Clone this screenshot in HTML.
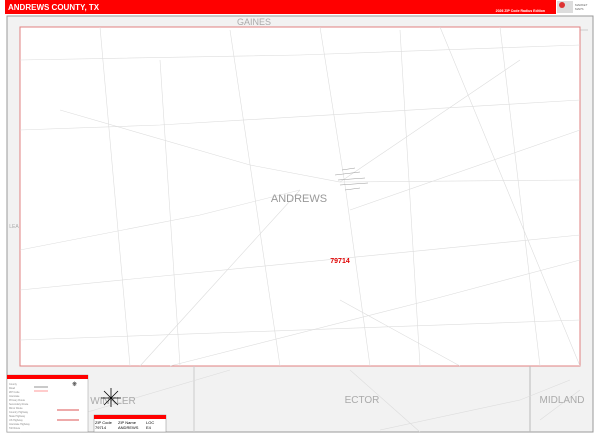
<!DOCTYPE html>
<html><head><meta charset="utf-8"><style>
html,body{margin:0;padding:0;background:#fff;width:600px;height:435px;overflow:hidden;font-family:"Liberation Sans",sans-serif}
</style></head><body>
<svg width="600" height="435" viewBox="0 0 600 435" xmlns="http://www.w3.org/2000/svg" font-family="Liberation Sans, sans-serif">
<rect x="5" y="0" width="551" height="14" fill="#ff0000"/>
<text x="8" y="10" font-size="8" font-weight="bold" fill="#fff">ANDREWS COUNTY, TX</text>
<text x="545" y="12" font-size="3.5" font-weight="bold" fill="#fff" text-anchor="end">2026 ZIP Code Radius Edition</text>
<rect x="557" y="1" width="16" height="12" fill="#ddd"/><circle cx="562" cy="5" r="3" fill="#d33"/>
<text x="575" y="6" font-size="3" fill="#666">MARKET</text><text x="575" y="10" font-size="3" fill="#666">MAPS</text>
<rect x="7" y="16" width="586" height="416" fill="#f2f2f2" stroke="#999" stroke-width="1"/>
<rect x="20" y="30" width="568" height="337" fill="#f2f2f2"/>
<line x1="20" y1="30" x2="588" y2="30" stroke="#ccc"/>
<rect x="20" y="27" width="560" height="339" fill="#fff" stroke="#e08080" stroke-width="1"/>
<line x1="194" y1="366" x2="194" y2="432" stroke="#ccc"/>
<line x1="530" y1="366" x2="530" y2="432" stroke="#bbb"/>
<g stroke="#ddd" stroke-width="0.6" fill="none">
<path d="M320 27 L345 185 L370 366"/>
<path d="M60 110 L250 165 L340 182 L520 60"/>
<path d="M340 182 L580 180"/>
<path d="M300 190 L200 300 L140 366"/>
<path d="M20 250 L200 215 L300 190"/>
<path d="M350 210 L580 130"/>
<path d="M340 300 L460 366"/>
<path d="M440 27 L580 366" />
<path d="M170 366 L430 300 L580 260"/>
<path d="M230 30 L280 366"/>
<path d="M100 27 L130 366"/>
<path d="M500 27 L540 366"/>
<path d="M20 340 L580 320"/>
<path d="M350 370 L420 432"/>
<path d="M380 430 L520 400 L570 380"/>
<path d="M540 420 L580 390"/>
<path d="M230 370 L20 432"/>
<path d="M160 60 L180 366"/>
<path d="M400 30 L420 366"/>
<path d="M20 130 L160 125 L580 100"/>
<path d="M20 290 L580 235"/>
<path d="M20 60 L300 55 L580 45"/>
</g>
<g stroke="#999" stroke-width="0.5">
<path d="M335 175 L360 172 M338 180 L365 178 M340 185 L368 183 M342 170 L355 168 M345 190 L360 188"/>
</g>
<text x="254" y="25" font-size="9" fill="#aaa" text-anchor="middle">GAINES</text>
<text x="299" y="202" font-size="11" fill="#999" text-anchor="middle">ANDREWS</text>
<text x="340" y="263" font-size="7" font-weight="bold" fill="#e00000" text-anchor="middle">79714</text>
<text x="362" y="403" font-size="10" fill="#aaa" text-anchor="middle">ECTOR</text>
<text x="562" y="403" font-size="10" fill="#aaa" text-anchor="middle">MIDLAND</text>
<text x="113" y="404" font-size="10" fill="#aaa" text-anchor="middle">WINKLER</text>
<text x="14" y="228" font-size="5" fill="#aaa" text-anchor="middle">LEA</text>
<rect x="7" y="375" width="81" height="57" fill="#fff" stroke="#999" stroke-width="0.5"/>
<rect x="7" y="375" width="81" height="4" fill="#ff0000"/>
<g fill="#888" font-size="2.5"><text x="9" y="385">County</text><text x="9" y="389">Road</text><text x="9" y="393">ZIP Code</text><text x="9" y="397">Interstate</text><text x="9" y="401">Primary Route</text><text x="9" y="405">Secondary Route</text><text x="9" y="409">Minor Route</text><text x="9" y="413">Country Highway</text><text x="9" y="417">State Highway</text><text x="9" y="421">US Highway</text><text x="9" y="425">Interstate Highway</text><text x="9" y="429">Toll Route</text></g>
<line x1="34" y1="387" x2="48" y2="387" stroke="#666" stroke-width="0.7"/><line x1="34" y1="391" x2="48" y2="391" stroke="#f99" stroke-width="1"/>
<line x1="57" y1="410" x2="79" y2="410" stroke="#d55"/><line x1="57" y1="420" x2="79" y2="420" stroke="#d55"/>
<text x="72" y="386" font-size="6" fill="#333">❋</text>
<g stroke="#000" stroke-width="0.8"><line x1="111" y1="388" x2="111" y2="407"/><line x1="101" y1="398" x2="121" y2="398"/><line x1="104" y1="391" x2="118" y2="405"/><line x1="118" y1="391" x2="104" y2="405"/></g>
<rect x="94" y="415" width="72" height="17" fill="#fff" stroke="#888" stroke-width="0.5"/>
<rect x="94" y="415" width="72" height="4" fill="#ff0000"/>
<text x="95" y="424" font-size="4" fill="#000">ZIP Code</text><text x="118" y="424" font-size="4" fill="#000">ZIP Name</text><text x="146" y="424" font-size="4" fill="#000">LOC</text>
<text x="95" y="429" font-size="4" fill="#000">79714</text><text x="118" y="429" font-size="4" fill="#000">ANDREWS</text><text x="146" y="429" font-size="4" fill="#000">E4</text>
</svg>
</body></html>
